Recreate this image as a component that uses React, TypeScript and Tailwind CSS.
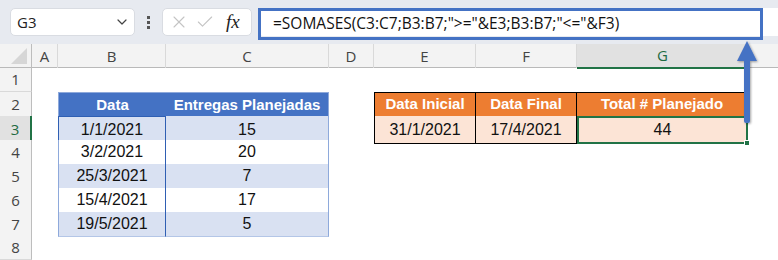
import { ChevronDown, X, Check } from 'lucide-react';

const cols = 'grid grid-cols-[32px_26px_108px_163px_45px_102px_101px_171px_1fr]';

const blueRows = [
    ['1/1/2021', '15'],
    ['3/2/2021', '20'],
    ['25/3/2021', '7'],
    ['15/4/2021', '17'],
    ['19/5/2021', '5'],
];

function RowHead({ n, selected }: { n: number; selected?: boolean }) {
    return (
        <div
            className={
                selected
                    ? 'flex items-center justify-center bg-[#e1e1e1] text-[#1e6b41] font-normal border-b border-[#d4d4d4] border-r-2 border-r-[#217346] text-[15px]'
                    : 'flex items-center justify-center bg-[#f3f3f3] text-[#444] font-normal border-b border-[#d9d9d9] border-r border-r-[#bdbdbd] text-[15px]'
            }
            style={{ fontFamily: '"Open Sans", sans-serif' }}
        >
            {n}
        </div>
    );
}

export default function App() {
    return (
        <div className="relative w-[778px] h-[260px] overflow-hidden bg-white" style={{ fontFamily: '"Liberation Sans", Arial, sans-serif' }}>
            {/* Formula toolbar */}
            <div className="h-[44px] bg-[#e7eaf0] flex items-start pt-[8px] pl-[10px]" style={{ fontFamily: '"Open Sans", sans-serif' }}>
                <div className="w-[125px] h-[28px] bg-white rounded-[5px] border border-[#d9dce2] flex items-center justify-between pl-[6px] pr-[4px] text-[15px] text-[#222]">
                    <span>G3</span>
                    <ChevronDown className="w-[16px] h-[16px] text-[#444]" strokeWidth={1.8} />
                </div>
                <div className="w-[27px] h-[28px] flex flex-col items-center justify-center gap-[2px]">
                    <div className="w-[3px] h-[3px] bg-[#555]" />
                    <div className="w-[3px] h-[3px] bg-[#555]" />
                    <div className="w-[3px] h-[3px] bg-[#555]" />
                </div>
                <div className="w-[90px] h-[28px] bg-white rounded-[5px] border border-[#d9dce2] flex items-center pl-[6px] gap-[6px]">
                    <X className="w-[20px] h-[20px] text-[#c4c4c4]" strokeWidth={1.3} />
                    <Check className="w-[20px] h-[20px] text-[#c4c4c4]" strokeWidth={1.3} />
                    <span className="ml-[5px] text-[19px] italic text-[#222]" style={{ fontFamily: '"Liberation Serif", serif' }}>fx</span>
                </div>
                <div className="ml-[6px] flex-1 h-[28px] bg-white rounded-l-[5px] relative">
                    <div className="absolute left-0 top-0 w-[505px] h-[32px] border-[3px] border-[#4472c4] flex items-center pl-[12px] text-[15.5px] text-[#111]">
                        =SOMASES(C3:C7;B3:B7;"&gt;="&amp;E3;B3:B7;"&lt;="&amp;F3)
                    </div>
                </div>
            </div>

            {/* Column headers */}
            <div className={`${cols} h-[24px] bg-[#f3f3f3] border-b border-[#b9b9b9] text-[15px] text-[#444]`} style={{ fontFamily: '"Open Sans", sans-serif' }}>
                <div className="relative border-r border-[#bdbdbd]">
                    <div className="absolute right-[4px] bottom-[4px] w-0 h-0 border-l-[16px] border-l-transparent border-b-[16px] border-b-[#d6d6d6]" />
                </div>
                <div className="flex items-center justify-center border-r border-[#d9d9d9]">A</div>
                <div className="flex items-center justify-center border-r border-[#d9d9d9]">B</div>
                <div className="flex items-center justify-center border-r border-[#d9d9d9]">C</div>
                <div className="flex items-center justify-center border-r border-[#d9d9d9]">D</div>
                <div className="flex items-center justify-center border-r border-[#d9d9d9]">E</div>
                <div className="flex items-center justify-center border-r border-[#d9d9d9]">F</div>
                <div className="flex items-center justify-center bg-[#e1e1e1] text-[#1e6b41] border-b-2 border-[#217346] -mb-px">G</div>
                <div />
            </div>

            {/* Row 1 */}
            <div className={`${cols} h-[24px]`}>
                <RowHead n={1} />
            </div>

            {/* Row 2: headers */}
            <div className={`${cols} h-[24px] text-[15px] font-bold text-white`}>
                <RowHead n={2} />
                <div />
                <div className="flex items-center justify-center bg-[#4472c4] border-l border-t border-[#8ea9db]">Data</div>
                <div className="flex items-center justify-center bg-[#4472c4] border-r border-t border-[#8ea9db]">Entregas Planejadas</div>
                <div />
                <div className="flex items-center justify-center bg-[#ed7d31] border border-black">Data Inicial</div>
                <div className="flex items-center justify-center bg-[#ed7d31] border-y border-r border-black">Data Final</div>
                <div className="flex items-center justify-center bg-[#ed7d31] border-y border-r border-black">Total # Planejado</div>
                <div />
            </div>

            {/* Rows 3-7 */}
            {blueRows.map((r, i) => {
                const shaded = i % 2 === 0;
                return (
                    <div key={i} className={`${cols} h-[24px] text-[16px] text-[#111]`}>
                        <RowHead n={i + 3} selected={i === 0} />
                        <div />
                        <div
                            className={
                                i === 0
                                    ? 'flex items-center justify-center bg-[#d9e1f2] border border-[#2f5fb3]'
                                    : shaded
                                      ? 'flex items-center justify-center bg-[#d9e1f2] border-l border-b border-l-[#8ea9db] border-b-[#b4c6e7] border-r border-r-[#2f5fb3]'
                                      : 'flex items-center justify-center bg-white border-l border-b border-l-[#8ea9db] border-b-[#b4c6e7] border-r border-r-[#2f5fb3]'
                            }
                        >
                            {r[0]}
                        </div>
                        <div
                            className={
                                shaded
                                    ? 'flex items-center justify-center bg-[#d9e1f2] border-r border-b border-r-[#8ea9db] border-b-[#b4c6e7]'
                                    : 'flex items-center justify-center bg-white border-r border-b border-r-[#8ea9db] border-b-[#b4c6e7]'
                            }
                        >
                            {r[1]}
                        </div>
                        <div />
                        {i === 0 ? (
                            <>
                                <div className="flex items-center justify-center bg-[#fce4d6] border-x border-b border-black">31/1/2021</div>
                                <div className="flex items-center justify-center bg-[#fce4d6] border-r border-b border-black">17/4/2021</div>
                                <div className="relative flex items-center justify-center bg-[#fce4d6] border-2 border-[#217346]">
                                    44
                                    <div className="absolute -right-[4px] -bottom-[4px] w-[6px] h-[6px] bg-[#217346] border border-white" />
                                </div>
                            </>
                        ) : (
                            <>
                                <div />
                                <div />
                                <div />
                            </>
                        )}
                        <div />
                    </div>
                );
            })}

            {/* Row 8 */}
            <div className={`${cols} h-[24px]`}>
                <RowHead n={8} />
            </div>

            {/* Arrow overlay */}
            <svg className="absolute left-[734px] top-[38px]" width="26" height="90" viewBox="0 0 26 90">
                <defs>
                    <filter id="sh" x="-50%" y="-20%" width="200%" height="140%">
                        <feDropShadow dx="1" dy="1" stdDeviation="1.2" floodColor="#000" floodOpacity="0.35" />
                    </filter>
                </defs>
                <g filter="url(#sh)">
                    <rect x="10" y="20" width="6" height="65" rx="2" fill="#4472c4" />
                    <polygon points="13,3 23,23 3,23" fill="#4472c4" />
                </g>
            </svg>
        </div>
    );
}
